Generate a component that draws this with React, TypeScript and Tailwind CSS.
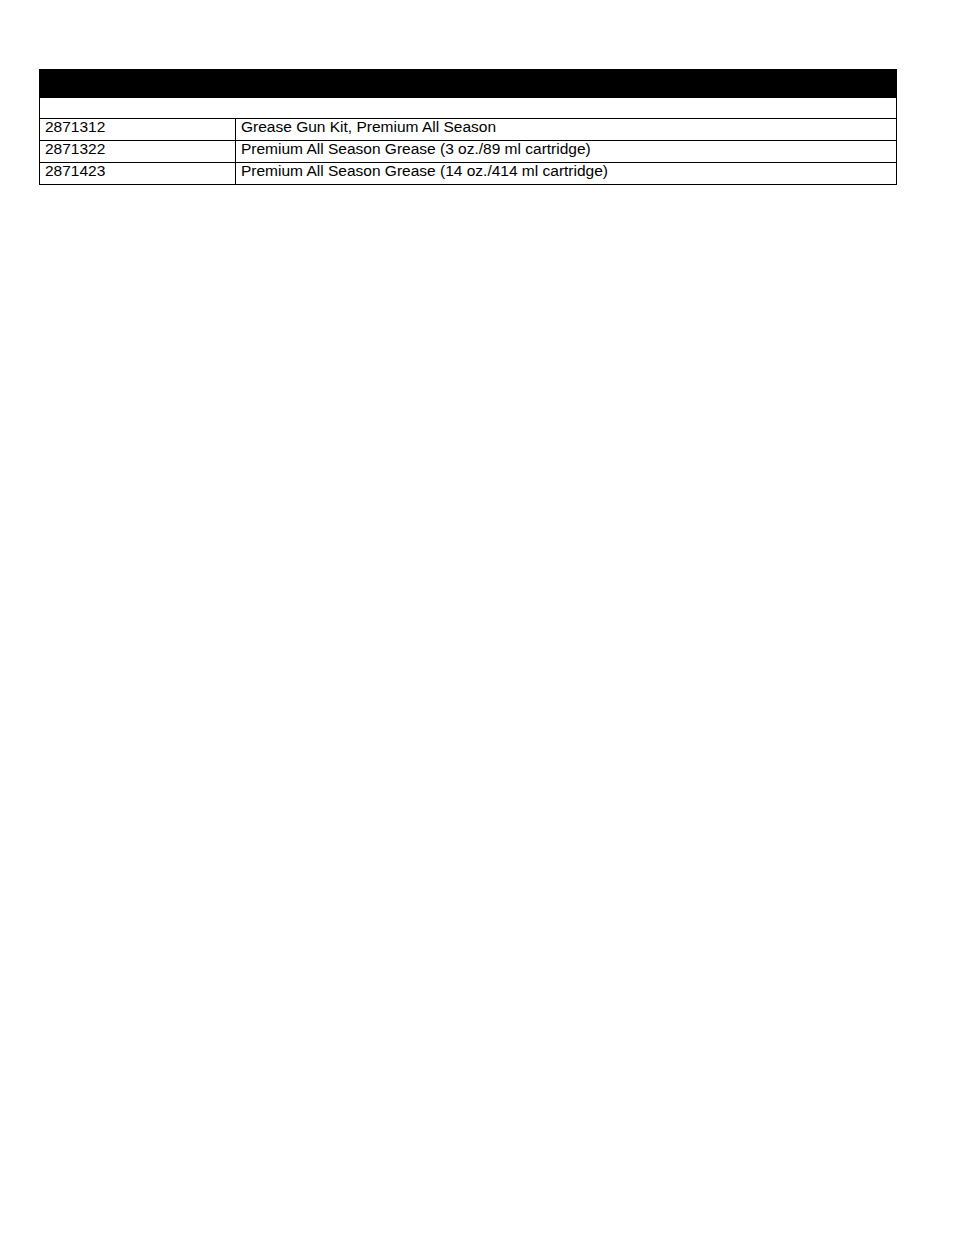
import React from 'react';

interface Part {
  number: string;
  description: string;
}

const parts: Part[] = [
  { number: '2871312', description: 'Grease Gun Kit, Premium All Season' },
  { number: '2871322', description: 'Premium All Season Grease (3 oz./89 ml cartridge)' },
  { number: '2871423', description: 'Premium All Season Grease (14 oz./414 ml cartridge)' },
];

const App: React.FC = () => {
  return (
    <div className="min-h-[1235px] w-[954px] bg-white pt-[69px] pl-[39px] font-['Liberation_Sans',Arial,sans-serif] text-black">
      <div className="w-[858px] border border-black">
        <div className="h-[28px] bg-black" />
        <div className="h-[21px] border-b border-black" />
        {parts.map((part, i) => (
          <div
            key={part.number}
            className={`flex text-[15.5px] leading-[13px] ${i < parts.length - 1 ? 'h-[22px] border-b border-black' : 'h-[21px]'}`}
          >
            <div className="w-[196px] shrink-0 border-r border-black pl-[5px] pt-[1px]">{part.number}</div>
            <div className="flex-1 pl-[5px] pt-[1px]">{part.description}</div>
          </div>
        ))}
      </div>
    </div>
  );
};

export default App;
